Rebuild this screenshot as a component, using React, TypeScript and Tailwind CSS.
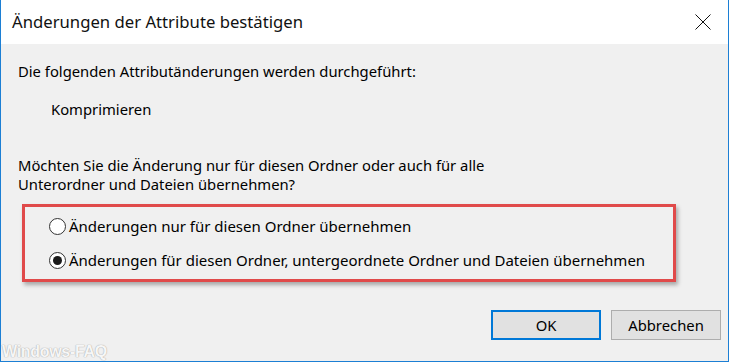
import { useState } from 'react';

// Windows 10 style radio button
function Radio({ checked }: { checked: boolean }) {
	return (
		<span className="w-[17px] h-[17px] rounded-full border border-[#333] bg-white flex items-center justify-center shrink-0">
			{checked && <span className="w-[9px] h-[9px] rounded-full bg-[#1a1a1a]" />}
		</span>
	);
}

export default function App() {
	const [choice, setChoice] = useState(1);
	const options = [
		'Änderungen nur für diesen Ordner übernehmen',
		'Änderungen für diesen Ordner, untergeordnete Ordner und Dateien übernehmen',
	];

	return (
		<div
			className="relative w-[729px] h-[362px] flex flex-col border-l border-r border-b border-[#1c7fd4] bg-[#f0f0f0] text-[#000] text-[14.8px] leading-[19px] overflow-hidden"
			style={{ fontFamily: '"Noto Sans", "Open Sans", sans-serif' }}
		>
			{/* Title bar */}
			<div className="h-[44px] bg-white flex items-center justify-between pl-[11px] pr-[15px] shrink-0">
				<span className="text-[16.7px] text-[#111] pb-[1px]">Änderungen der Attribute bestätigen</span>
				<svg width="16" height="16" viewBox="0 0 16 16" className="mr-[2px]">
					<path d="M0.5 0.5 L15.5 15.5 M15.5 0.5 L0.5 15.5" stroke="#111" strokeWidth="1" />
				</svg>
			</div>

			{/* Body */}
			<div className="flex flex-col pl-[17px] pt-[18px]">
				<p>Die folgenden Attributänderungen werden durchgeführt:</p>
				<p className="pl-[33px] mt-[19px]">Komprimieren</p>
				<p className="mt-[37px]">
					Möchten Sie die Änderung nur für diesen Ordner oder auch für alle
					<br />
					Unterordner und Dateien übernehmen?
				</p>

				{/* Highlighted options */}
				<div className="mt-[10px] ml-[4px] w-[654px] h-[78px] border-[3px] border-[#e04a4a] shadow-[2px_3px_4px_rgba(0,0,0,0.3)] flex flex-col justify-center gap-[15px] pl-[24px]">
					{options.map((label, i) => (
						<label key={i} className="flex items-center gap-[3px] cursor-default text-[15px]" onClick={() => setChoice(i)}>
							<Radio checked={choice === i} />
							<span>{label}</span>
						</label>
					))}
				</div>
			</div>

			{/* Buttons */}
			<div className="mt-auto mb-[21px] flex justify-end gap-[10px] pr-[7px]">
				<button className="w-[110px] h-[30px] border-2 border-[#0078d7] bg-[#e1e1e1]">OK</button>
				<button className="w-[110px] h-[30px] border border-[#adadad] bg-[#e1e1e1]">Abbrechen</button>
			</div>

			{/* Watermark */}
			<span
				className="absolute left-[1px] bottom-0 text-[16px] leading-[18px] font-bold text-white/90 tracking-[-0.3px]"
				style={{ fontFamily: '"Liberation Sans", sans-serif', textShadow: '0 0 1px #a8a8a8, 0 0 1px #a8a8a8' }}
			>
				Windows-FAQ
			</span>
		</div>
	);
}
